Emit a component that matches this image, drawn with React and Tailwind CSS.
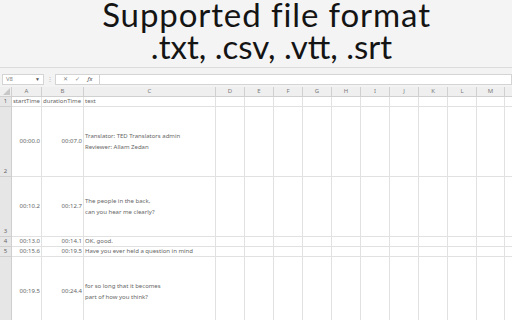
import React from 'react';

const cols = ['A', 'B', 'C', 'D', 'E', 'F', 'G', 'H', 'I', 'J', 'K', 'L', 'M', ''];
const widths = [30, 42, 132, 29, 29, 29, 29, 29, 29, 29, 29, 29, 28, 20];

const rows = [
  { n: 1, h: 'h-[10px]', a: 'startTime', b: 'durationTime', c: ['text'], head: true },
  { n: 2, h: 'h-[70px]', a: '00:00.0', b: '00:07.0', c: ['Translator: TED Translators admin', 'Reviewer: Allam Zedan'] },
  { n: 3, h: 'h-[60px]', a: '00:10.2', b: '00:12.7', c: ['The people in the back,', 'can you hear me clearly?'] },
  { n: 4, h: 'h-[10px]', a: '00:13.0', b: '00:14.1', c: ['OK, good.'] },
  { n: 5, h: 'h-[10px]', a: '00:15.6', b: '00:19.5', c: ['Have you ever held a question in mind'] },
  { n: 6, h: 'h-[70px]', a: '00:19.5', b: '00:24.4', c: ['for so long that it becomes', 'part of how you think?'] },
];

const Cell = ({ w, className = '', children }) => (
  <div
    className={`shrink-0 border-r border-b border-[#e1e1e1] flex items-center overflow-hidden whitespace-nowrap ${className}`}
    style={{ width: w }}
  >
    {children}
  </div>
);

export default function App() {
  return (
    <div className="w-[512px] h-[320px] overflow-hidden bg-white font-['Noto_Sans',sans-serif]">
      <div className="h-[68px] bg-[#f4f4f4] border-b border-[#dcdcdc] flex flex-col items-center pl-[21px] text-[#141414] font-['Lato',sans-serif] text-[33px]">
        <p className="leading-[29px] tracking-[0.9px]">Supported file format</p>
        <p className="leading-[35px] pl-[10px]">.txt, .csv, .vtt, .srt</p>
      </div>

      <div className="h-[20px] bg-[#f3f3f3] flex items-center pt-[3px] text-[6px] text-[#8a8a8a]">
        <div className="ml-[2px] w-[42px] h-[11px] bg-white border border-[#d4d4d4] flex items-center justify-between px-[3px]">
          <span>V8</span>
          <span className="text-[5px] text-[#555]">▼</span>
        </div>
        <span className="w-[11px] text-center text-[#b0b0b0]">⋮</span>
        <div className="w-[45px] h-[11px] bg-white border border-[#d4d4d4] flex items-center justify-around px-[3px]">
          <span>✕</span>
          <span>✓</span>
          <span className="italic text-[#444]">fx</span>
        </div>
        <div className="flex-1 h-[11px] bg-white border border-[#d4d4d4] border-l-0" />
      </div>

      <div className="h-[10px] flex bg-[#efefef] text-[6px] text-[#7a7a7a] mt-[-1px]">
        <div className="w-[12px] shrink-0 border-r border-b border-[#d0d0d0] relative">
          <svg className="absolute right-[1px] bottom-[1px]" width="7" height="7" viewBox="0 0 7 7">
            <polygon points="7,0 7,7 0,7" fill="#c8c8c8" />
          </svg>
        </div>
        {cols.map((c, i) => (
          <div
            key={i}
            className="shrink-0 border-r border-b border-[#d0d0d0] flex items-center justify-center"
            style={{ width: widths[i] }}
          >
            {c}
          </div>
        ))}
      </div>

      {rows.map((r) => (
        <div key={r.n} className={`flex ${r.h} text-[6px] text-[#666]`}>
          <div className="w-[12px] shrink-0 bg-[#e6e6e6] border-r border-b border-[#cfcfcf] flex items-end justify-center text-[#666]">
            {r.n !== 6 && <span className="leading-[9px]">{r.n}</span>}
          </div>
          <Cell w={widths[0]} className={r.head ? 'pl-[1px]' : 'justify-end pr-[1px]'}>{r.a}</Cell>
          <Cell w={widths[1]} className={r.head ? 'pl-[1px]' : 'justify-end pr-[1px]'}>{r.b}</Cell>
          <Cell w={widths[2]} className="pl-[1px]">
            <div className="flex flex-col leading-[11px]">
              {r.c.map((t) => (
                <span key={t} className={r.c.length === 1 ? 'leading-[9px]' : ''}>{t}</span>
              ))}
            </div>
          </Cell>
          {widths.slice(3).map((w, i) => (
            <Cell key={i} w={w} />
          ))}
        </div>
      ))}
    </div>
  );
}
